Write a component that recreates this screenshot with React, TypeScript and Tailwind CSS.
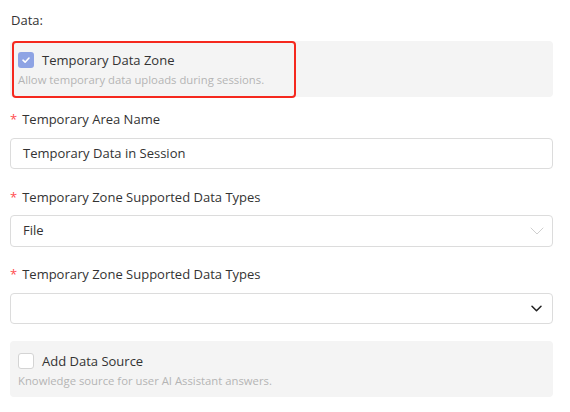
import React from "react";

const font = { fontFamily: '"Open Sans", "Noto Sans", sans-serif' };

function Check({ checked }: { checked: boolean }) {
  return checked ? (
    <span className="flex h-4 w-4 items-center justify-center rounded-[3px] bg-[#8ea3e4]">
      <svg width="10" height="10" viewBox="0 0 10 10" fill="none">
        <path d="M2 5.2 L4.1 7.2 L8 3" stroke="white" strokeWidth="1.6" strokeLinecap="round" strokeLinejoin="round" />
      </svg>
    </span>
  ) : (
    <span className="block h-4 w-4 rounded-[3px] border border-[#d4d4d4] bg-white" />
  );
}

function Label({ text }: { text: string }) {
  return (
    <div className="flex items-center text-[13px] leading-[20px] text-[#333]">
      <span className="mr-[5px] text-[#ff4d4f] text-[13px]">*</span>
      {text}
    </div>
  );
}

function LightChevron() {
  return (
    <svg width="14" height="8" viewBox="0 0 14 8" fill="none">
      <path d="M1 1 L7 7 L13 1" stroke="#cfcfcf" strokeWidth="1" strokeLinecap="round" strokeLinejoin="round" />
    </svg>
  );
}

function DarkChevron() {
  return (
    <svg width="11" height="7" viewBox="0 0 11 7" fill="none">
      <path d="M1 1.2 L5.5 5.8 L10 1.2" stroke="#222" strokeWidth="1.5" strokeLinecap="round" strokeLinejoin="round" />
    </svg>
  );
}

export default function App() {
  return (
    <div className="h-[412px] w-[570px] bg-white pl-[10px] pr-[17px] pt-[10px]" style={font}>
      <div className="pl-[1px] text-[13px] leading-[20px] text-[#333]">Data:</div>

      <div className="relative mt-[11px] h-[56px] rounded-[4px] bg-[#f4f4f4]">
        <div className="absolute left-[2px] top-0 h-[57px] w-[284px] rounded-[4px] border-2 border-[#f5281e]" />
        <div className="flex items-center gap-[8px] pl-[8px] pt-[10px]">
          <Check checked />
          <span className="text-[13px] leading-[18px] text-[#333]">Temporary Data Zone</span>
        </div>
        <div className="mt-[3px] pl-[8px] text-[11.3px] leading-[16px] text-[#b4b4b4]">
          Allow temporary data uploads during sessions.
        </div>
      </div>

      <div className="mt-[12px]">
        <Label text="Temporary Area Name" />
      </div>
      <div className="mt-[9px] flex h-[31px] items-center rounded-[4px] border border-[#dcdcdc] px-[12px] text-[13px] text-[#333]">
        Temporary Data in Session
      </div>

      <div className="mt-[18px]">
        <Label text="Temporary Zone Supported Data Types" />
      </div>
      <div className="mt-[8px] flex h-[32px] items-center justify-between rounded-[4px] border border-[#dcdcdc] pl-[12px] pr-[8px] text-[13px] text-[#333]">
        <span>File</span>
        <LightChevron />
      </div>

      <div className="mt-[17px]">
        <Label text="Temporary Zone Supported Data Types" />
      </div>
      <div className="mt-[9px] flex h-[31px] items-center justify-end rounded-[4px] border border-[#dcdcdc] pr-[10px]">
        <DarkChevron />
      </div>

      <div className="mt-[17px] h-[56px] rounded-[4px] bg-[#f4f4f4]">
        <div className="flex items-center gap-[8px] pl-[8px] pt-[11px]">
          <Check checked={false} />
          <span className="text-[13px] leading-[18px] text-[#333]">Add Data Source</span>
        </div>
        <div className="mt-[3px] pl-[8px] text-[11.3px] leading-[16px] text-[#b4b4b4]">
          Knowledge source for user AI Assistant answers.
        </div>
      </div>
    </div>
  );
}
